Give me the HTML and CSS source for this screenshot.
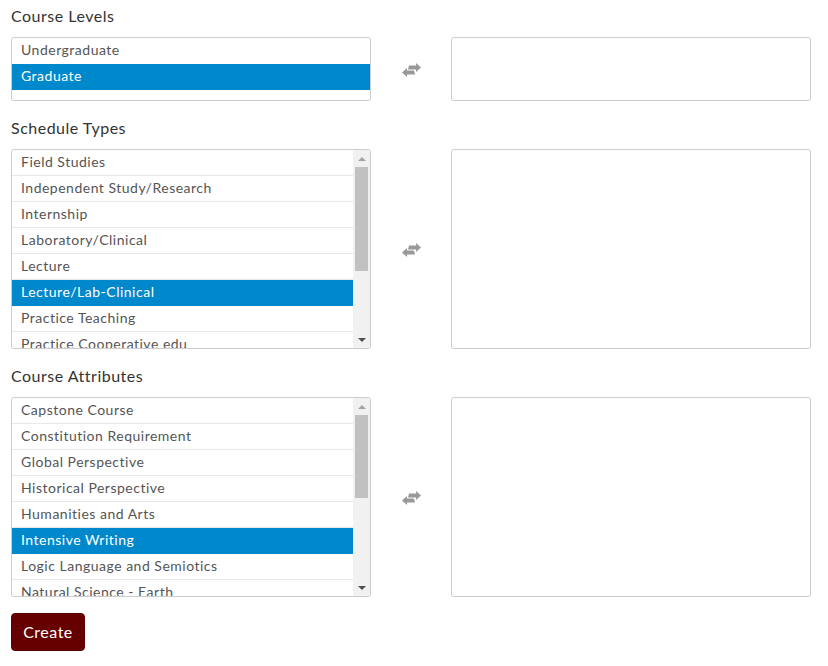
FILE: index.html
```html
<!DOCTYPE html>
<html>
<head>
<meta charset="utf-8">
<link rel="stylesheet" href="styles.css">
</head>
<body>
<div class="page">
  <section class="field">
    <div class="label">Course Levels</div>
    <div class="pair">
      <div class="list short">
        <div class="items">
          <div class="item">Undergraduate</div>
          <div class="item selected">Graduate</div>
        </div>
      </div>
      <div class="swap"><svg width="21" height="14" viewBox="0 0 21 14"><path d="M8 2.5h7V0l5 4.5-5 4.5V6.5H7z M13 7.5H6V5L1 9.5 6 14v-2.5h8z" fill="#999"/></svg></div>
      <div class="list short target"></div>
    </div>
  </section>
  <section class="field">
    <div class="label">Schedule Types</div>
    <div class="pair">
      <div class="list tall">
        <div class="items">
          <div class="item">Field Studies</div>
          <div class="item">Independent Study/Research</div>
          <div class="item">Internship</div>
          <div class="item">Laboratory/Clinical</div>
          <div class="item">Lecture</div>
          <div class="item selected">Lecture/Lab-Clinical</div>
          <div class="item">Practice Teaching</div>
          <div class="item">Practice Cooperative edu</div>
          <div class="item">Recitation</div>
          <div class="item">Seminar</div>
          <div class="item">Studio</div>
          <div class="item">Thesis/Dissertation</div>
        </div>
        <div class="scrollbar">
          <div class="sb-btn"><span class="tri up"></span></div>
          <div class="sb-track"><div class="sb-thumb st-12"></div></div>
          <div class="sb-btn"><span class="tri down"></span></div>
        </div>
      </div>
      <div class="swap"><svg width="21" height="14" viewBox="0 0 21 14"><path d="M8 2.5h7V0l5 4.5-5 4.5V6.5H7z M13 7.5H6V5L1 9.5 6 14v-2.5h8z" fill="#999"/></svg></div>
      <div class="list tall target"></div>
    </div>
  </section>
  <section class="field">
    <div class="label">Course Attributes</div>
    <div class="pair">
      <div class="list tall">
        <div class="items">
          <div class="item">Capstone Course</div>
          <div class="item">Constitution Requirement</div>
          <div class="item">Global Perspective</div>
          <div class="item">Historical Perspective</div>
          <div class="item">Humanities and Arts</div>
          <div class="item selected">Intensive Writing</div>
          <div class="item">Logic Language and Semiotics</div>
          <div class="item">Natural Science - Earth</div>
          <div class="item">Natural Science - Life</div>
          <div class="item">Natural Science - Physical</div>
          <div class="item">Oral Communication</div>
          <div class="item">Quantitative Reasoning</div>
          <div class="item">Service Learning</div>
          <div class="item">Social and Behavioral Sciences</div>
          <div class="item">Written Communication</div>
        </div>
        <div class="scrollbar">
          <div class="sb-btn"><span class="tri up"></span></div>
          <div class="sb-track"><div class="sb-thumb st-15"></div></div>
          <div class="sb-btn"><span class="tri down"></span></div>
        </div>
      </div>
      <div class="swap"><svg width="21" height="14" viewBox="0 0 21 14"><path d="M8 2.5h7V0l5 4.5-5 4.5V6.5H7z M13 7.5H6V5L1 9.5 6 14v-2.5h8z" fill="#999"/></svg></div>
      <div class="list tall target"></div>
    </div>
  </section>
  <button class="create">Create</button>
</div>
</body>
</html>
```
FILE: styles.css
```css
html, body {
  margin: 0;
  padding: 0;
  background: #fff;
}
body {
  font-family: Lato, "Open Sans", sans-serif;
  color: #333;
  letter-spacing: 0.5px;
}
.page {
  padding: 5px 11px 0;
}
.field {
  margin-bottom: 16px;
}
.label {
  font-size: 16px;
  line-height: 22px;
  margin-bottom: 10px;
  color: #333;
}
.pair {
  display: flex;
  align-items: center;
}
.list {
  box-sizing: border-box;
  width: 360px;
  border: 1px solid #ccc;
  border-radius: 3px;
  background: #fff;
  overflow: hidden;
  display: flex;
}
.short { height: 64px; }
.tall { height: 200px; }
.items {
  flex: 1;
  min-width: 0;
  overflow: hidden;
}
.item {
  height: 25px;
  line-height: 24px;
  padding-left: 9px;
  font-size: 14px;
  color: #555;
  border-bottom: 1px solid #e8e8e8;
  white-space: nowrap;
}
.short .item { border-bottom-color: transparent; }
.item.selected {
  background: #0088cc;
  color: #fff;
  height: 26px;
  border-bottom: none;
}
.scrollbar {
  width: 17px;
  flex: none;
  background: #f1f1f1;
  display: flex;
  flex-direction: column;
}
.sb-btn {
  height: 17px;
  display: flex;
  align-items: center;
  justify-content: center;
}
.sb-track {
  flex: 1;
  padding: 0 2px;
}
.sb-thumb {
  background: #c1c1c1;
}
.st-12 { height: 104px; }
.st-15 { height: 83px; }
.tri {
  width: 0;
  height: 0;
  border-left: 4px solid transparent;
  border-right: 4px solid transparent;
}
.tri.up { border-bottom: 4px solid #a3a3a3; }
.tri.down { border-top: 4px solid #505050; }
.swap {
  width: 80px;
  display: flex;
  justify-content: center;
  padding-top: 2px;
}
.swap svg { display: block; }
.create {
  font-family: Lato, "Open Sans", sans-serif;
  font-size: 16px;
  letter-spacing: 0.5px;
  color: #fff;
  background: #660000;
  border: 1px solid #5a0000;
  border-radius: 4px;
  width: 74px;
  height: 38px;
  padding: 0 0 2px;
  cursor: pointer;
}
```
